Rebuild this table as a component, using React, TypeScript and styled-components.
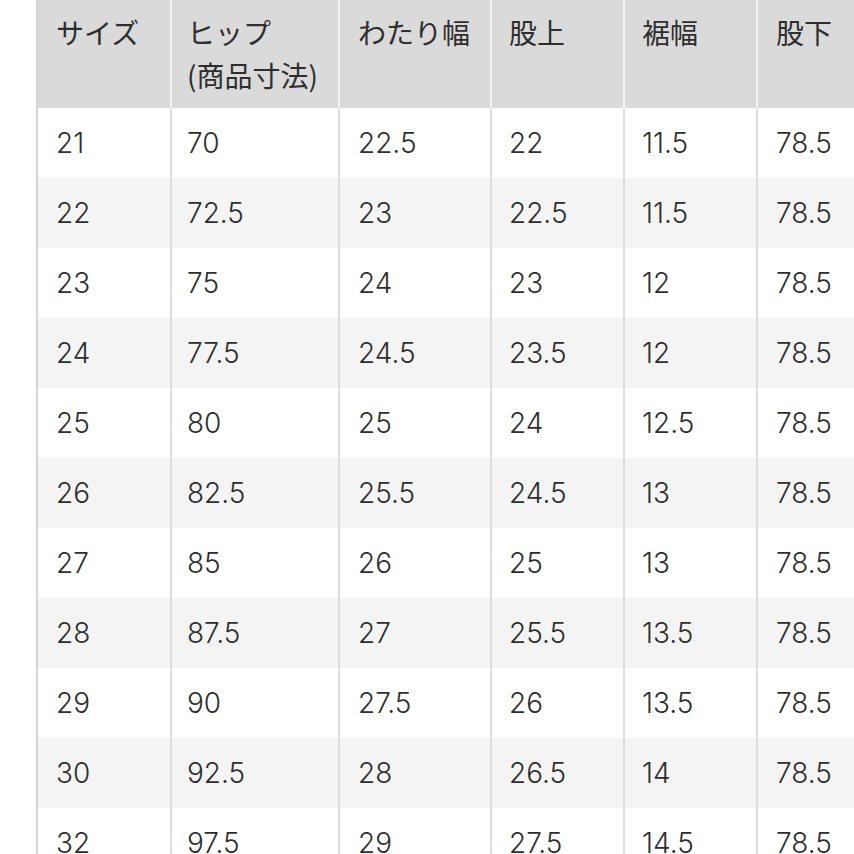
import React from 'react';
import styled, { createGlobalStyle, css } from 'styled-components';

const GlobalStyle = createGlobalStyle`
  html, body {
    margin: 0;
    padding: 0;
    background: #ffffff;
    overflow: hidden;
  }
  body {
    font-family: Inter, "Noto Sans CJK JP", sans-serif;
    color: #2e2e2e;
  }
`;

const Page = styled.div`
  padding-left: 36px;
  width: 854px;
  height: 854px;
  overflow: hidden;
  box-sizing: border-box;
`;

const Table = styled.table`
  border-collapse: collapse;
  table-layout: fixed;
  width: 853px;
  font-size: 28px;
  font-weight: 300;
  color: #2e2e2e;
`;

const HeadCell = styled.th<{ $pad: number }>`
  background: #dadada;
  font-weight: 400;
  text-align: left;
  vertical-align: top;
  line-height: 43px;
  height: 108px;
  box-sizing: border-box;
  border-left: 2px solid #f3f3f3;
  white-space: nowrap;
  font-family: "Noto Sans CJK JP", sans-serif;
  ${({ $pad }) => css`
    padding: 11px 10px 10px ${$pad}px;
  `}

  &:first-child {
    border-left: 2px solid #d6d6d6;
  }
`;

const Row = styled.tr<{ $striped: boolean }>`
  ${({ $striped }) => css`
    background: ${$striped ? '#f4f4f4' : '#ffffff'};
  `}
`;

const Cell = styled.td<{ $pad: number }>`
  height: 70px;
  box-sizing: border-box;
  line-height: 1;
  vertical-align: middle;
  border-left: 2px solid #dedede;
  ${({ $pad }) => css`
    padding: 0 10px 0 ${$pad}px;
  `}

  &:first-child {
    border-left: 2px solid #d6d6d6;
  }
`;

const columns = [
  { width: 134, pad: 18 },
  { width: 168, pad: 15 },
  { width: 152, pad: 18 },
  { width: 133, pad: 17 },
  { width: 133, pad: 17 },
  { width: 133, pad: 18 },
];

const headers = ['サイズ', 'ヒップ\n(商品寸法)', 'わたり幅', '股上', '裾幅', '股下'];

const rows = [
  ['21', '70', '22.5', '22', '11.5', '78.5'],
  ['22', '72.5', '23', '22.5', '11.5', '78.5'],
  ['23', '75', '24', '23', '12', '78.5'],
  ['24', '77.5', '24.5', '23.5', '12', '78.5'],
  ['25', '80', '25', '24', '12.5', '78.5'],
  ['26', '82.5', '25.5', '24.5', '13', '78.5'],
  ['27', '85', '26', '25', '13', '78.5'],
  ['28', '87.5', '27', '25.5', '13.5', '78.5'],
  ['29', '90', '27.5', '26', '13.5', '78.5'],
  ['30', '92.5', '28', '26.5', '14', '78.5'],
  ['32', '97.5', '29', '27.5', '14.5', '78.5'],
];

function App() {
  return (
    <>
      <GlobalStyle />
      <Page>
        <Table>
          <colgroup>
            {columns.map((col, i) => (
              <col key={i} style={{ width: col.width }} />
            ))}
          </colgroup>
          <thead>
            <tr>
              {headers.map((h, c) => (
                <HeadCell key={h} $pad={columns[c].pad}>
                  {h.split('\n').map((line, i) => (
                    <React.Fragment key={line}>
                      {i > 0 && <br />}
                      {line}
                    </React.Fragment>
                  ))}
                </HeadCell>
              ))}
            </tr>
          </thead>
          <tbody>
            {rows.map((row, r) => (
              <Row key={row[0]} $striped={r % 2 === 1}>
                {row.map((value, c) => (
                  <Cell key={c} $pad={columns[c].pad}>
                    {value}
                  </Cell>
                ))}
              </Row>
            ))}
          </tbody>
        </Table>
      </Page>
    </>
  );
}

export default App;
